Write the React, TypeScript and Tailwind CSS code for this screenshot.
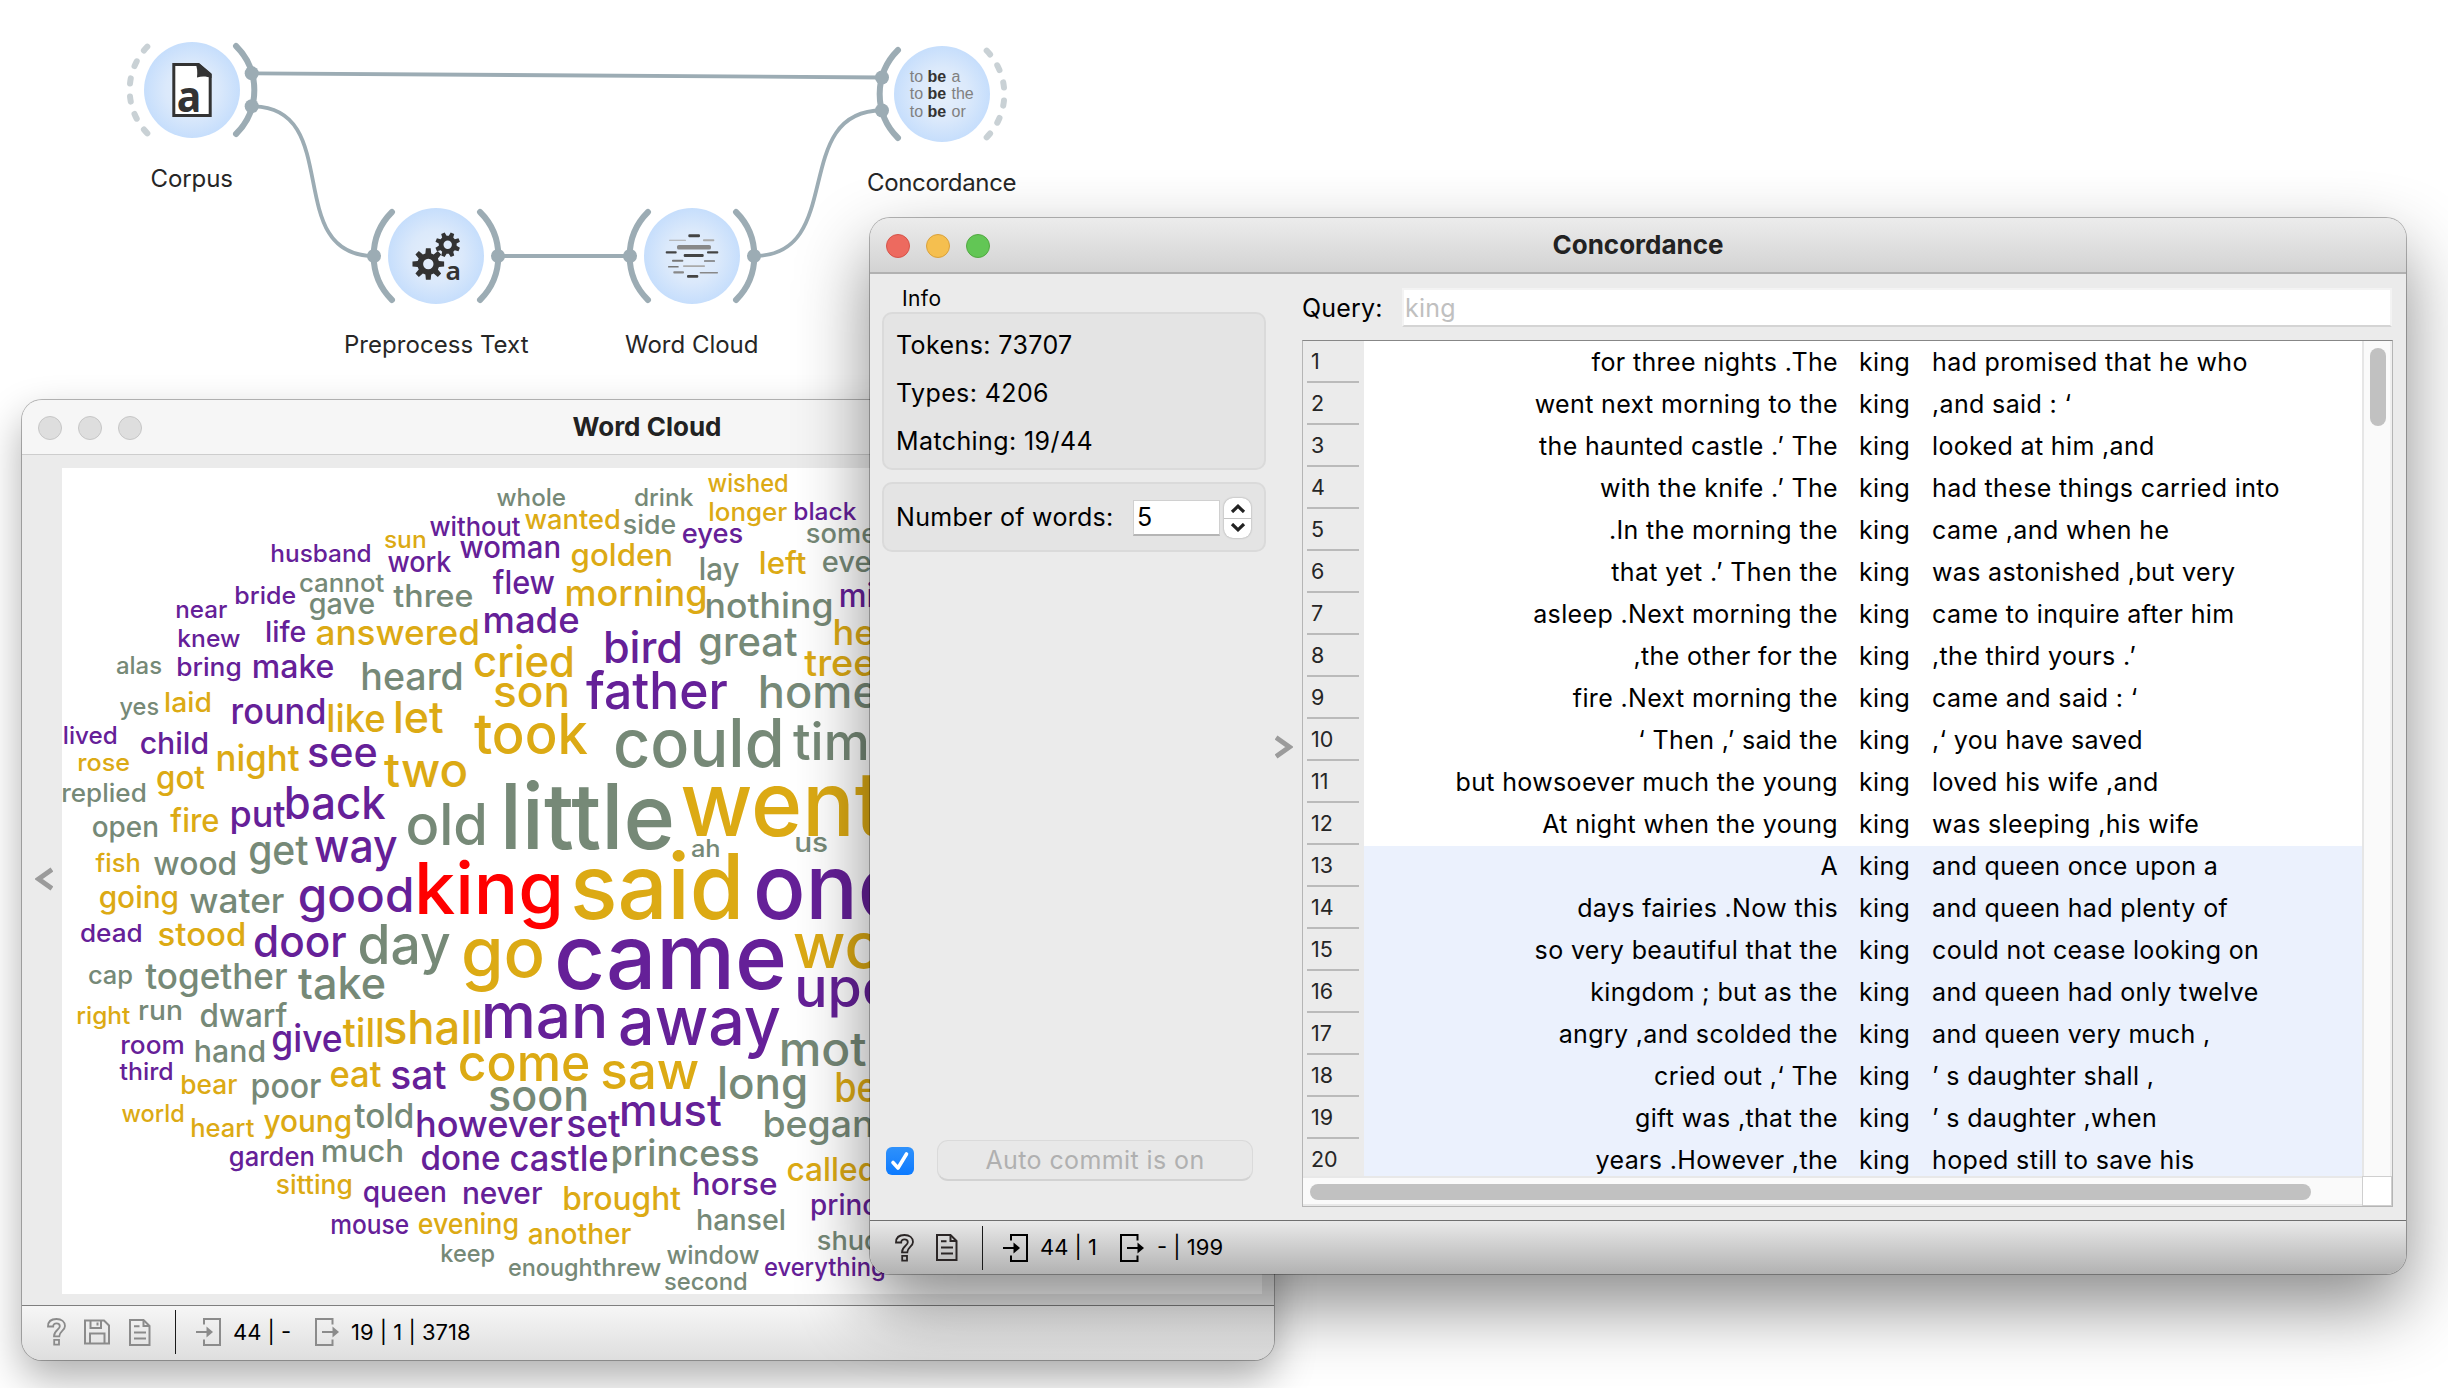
import React from "react";

type Tone = "p" | "y" | "g" | "r";
type Word = [text: string, left: number, right: number, baseline: number, size: number, tone: Tone];

const WORDS: Word[] = [
  ["husband", 272, 370, 561.7, 24, "p"],
  ["sun", 385, 425, 547.7, 24, "y"],
  ["work", 388, 451, 572, 28, "p"],
  ["cannot", 300, 384, 591.7, 25, "g"],
  ["gave", 310, 374, 613.5, 28, "g"],
  ["three", 394, 472, 607.3, 31, "g"],
  ["bride", 236, 295, 603.7, 24, "p"],
  ["near", 177, 227, 617.7, 24, "p"],
  ["knew", 179, 240, 647.2, 24, "p"],
  ["life", 267, 305, 641.7, 29, "p"],
  ["answered", 317, 477.5, 645.3, 35, "y"],
  ["alas", 117, 161, 673.8, 24, "g"],
  ["bring", 178, 240, 675.5, 25.5, "p"],
  ["make", 254, 333, 677.5, 32, "p"],
  ["heard", 363, 461, 689.7, 38, "g"],
  ["yes", 120, 158, 715.3, 24, "g"],
  ["laid", 166, 210, 711.5, 27.5, "y"],
  ["round", 233, 324, 723.5, 35.5, "p"],
  ["like", 329, 384, 731.5, 38.5, "y"],
  ["let", 396, 443, 733.3, 44, "y"],
  ["lived", 64.5, 116, 743.5, 24, "p"],
  ["child", 141, 207, 753.5, 30, "p"],
  ["rose", 79, 129, 771.2, 24, "y"],
  ["got", 157.5, 204.5, 789.3, 32, "y"],
  ["night", 218, 299, 771.3, 36, "y"],
  ["see", 309, 376, 766.8, 42, "p"],
  ["two", 385, 466, 787.2, 47, "y"],
  ["replied", 63, 145, 801.5, 25, "g"],
  ["put", 232, 285, 827, 36, "p"],
  ["back", 287, 385, 819.3, 45, "p"],
  ["fire", 171, 218, 831.5, 32, "y"],
  ["open", 93, 157, 837, 28, "g"],
  ["whole", 497, 565, 505.5, 24, "g"],
  ["drink", 635, 693, 505.5, 24, "g"],
  ["wished", 708, 787, 492, 24.5, "y"],
  ["without", 430, 520, 535.7, 26, "p"],
  ["wanted", 525, 619, 529.3, 27.5, "y"],
  ["side", 624, 675, 533.7, 26, "g"],
  ["longer", 710, 787, 521.3, 25, "y"],
  ["black", 795, 856, 519.7, 24, "p"],
  ["woman", 460, 559, 557.5, 30, "p"],
  ["golden", 572, 671, 565.5, 31, "y"],
  ["eyes", 683, 742, 543.3, 27, "p"],
  ["some", 807, 876, 543.3, 26, "g"],
  ["lay", 701, 739, 579.5, 31, "g"],
  ["left", 761, 806, 573.7, 31, "y"],
  ["even", 823, 887, 572, 28, "g"],
  ["flew", 493.5, 554.5, 593.5, 32, "p"],
  ["morning", 567, 705, 605.5, 36, "y"],
  ["nothing", 707, 831, 617.5, 35, "g"],
  ["mi", 841, 873, 607, 32, "p"],
  ["made", 485, 578, 633.2, 36, "p"],
  ["bird", 606, 680, 663.2, 44, "p"],
  ["great", 700, 797, 655.5, 40, "g"],
  ["he", 835, 874, 645.3, 35, "y"],
  ["tree", 805, 874, 675.5, 37, "y"],
  ["cried", 475, 572, 677.2, 43, "y"],
  ["son", 495, 567, 707.3, 44, "y"],
  ["father", 587, 727, 709.2, 52, "p"],
  ["home", 761, 877, 707.5, 45, "g"],
  ["took", 475, 587, 753.6, 56, "y"],
  ["could", 616, 780, 767.3, 67, "g"],
  ["tim", 794, 866, 759.7, 52, "g"],
  ["old", 408, 484, 845.3, 57, "g"],
  ["little", 506, 671, 849.3, 91, "g"],
  ["ah", 692, 719, 857.3, 24, "g"],
  ["us", 796, 827, 851.5, 26, "g"],
  ["went", 682, 883, 835.5, 90, "y"],
  ["king", 419, 559, 913.5, 72, "r"],
  ["said", 574, 738, 919, 91, "y"],
  ["once", 757, 955, 919, 91, "p"],
  ["go", 464, 542, 977.3, 69, "y"],
  ["came", 558, 783, 989, 91, "p"],
  ["wo", 794, 880, 967.5, 63, "y"],
  ["upon", 798, 925, 1007.3, 54, "p"],
  ["man", 485, 604, 1037.5, 62, "p"],
  ["away", 621, 780, 1045.3, 67, "p"],
  ["fish", 96, 139, 871.8, 25, "y"],
  ["wood", 154, 235, 875.2, 32, "g"],
  ["get", 250, 308, 865.4, 41, "g"],
  ["way", 315, 397, 861.6, 46, "p"],
  ["going", 100, 177, 907.5, 30, "y"],
  ["water", 190, 284, 913.3, 34, "g"],
  ["good", 300, 411, 911.5, 48, "p"],
  ["dead", 81, 141, 941.7, 24.5, "p"],
  ["stood", 159, 244, 945.5, 32.5, "y"],
  ["door", 255, 346, 957.2, 44, "p"],
  ["day", 360, 450, 963.6, 55, "g"],
  ["cap", 89, 132, 983.6, 25, "g"],
  ["together", 146, 287, 989.4, 35.5, "g"],
  ["take", 299, 384, 999.3, 44.5, "g"],
  ["right", 78, 130, 1024, 24, "y"],
  ["run", 140, 181, 1019.8, 27, "g"],
  ["dwarf", 201, 287, 1027, 32, "g"],
  ["room", 122, 183, 1053.7, 25, "p"],
  ["hand", 196, 264, 1061.7, 30.5, "g"],
  ["give", 273, 341, 1051.6, 38, "p"],
  ["till", 343.5, 382, 1047.3, 40, "y"],
  ["shall", 385, 480, 1043.5, 47, "y"],
  ["third", 120, 172, 1079.6, 24, "p"],
  ["bear", 182, 237, 1093.8, 26, "y"],
  ["poor", 253, 321, 1097.8, 34, "g"],
  ["eat", 331, 381, 1087.3, 36, "y"],
  ["sat", 392, 446, 1089, 40, "p"],
  ["world", 122, 183, 1122, 24, "y"],
  ["heart", 192, 254, 1137.3, 25.5, "y"],
  ["young", 264, 350, 1131.6, 31, "y"],
  ["told", 355, 412, 1127.6, 34, "g"],
  ["however", 417.5, 562.5, 1137.3, 37, "p"],
  ["garden", 230, 313, 1165.7, 26, "p"],
  ["much", 323, 402, 1161.7, 31, "g"],
  ["done", 422, 499, 1169.5, 33.5, "p"],
  ["sitting", 277, 351, 1193.7, 26, "y"],
  ["queen", 364, 445, 1201.7, 29, "p"],
  ["mouse", 332, 408, 1233.6, 26, "p"],
  ["evening", 419, 517, 1233.8, 28, "y"],
  ["keep", 442, 494, 1261.7, 24, "g"],
  ["come", 460, 588, 1081.3, 51, "y"],
  ["saw", 602.5, 698.5, 1089.3, 51, "y"],
  ["mot", 782, 866, 1065.5, 47, "g"],
  ["long", 720, 805, 1098.8, 44.5, "g"],
  ["be", 837, 876, 1102, 41, "y"],
  ["soon", 490, 586, 1110.8, 43, "g"],
  ["must", 622, 721, 1125.5, 43.5, "p"],
  ["set", 568, 620, 1137, 37.5, "p"],
  ["began", 765, 872, 1137.3, 37, "g"],
  ["princess", 613, 758, 1165.5, 37, "g"],
  ["castle", 511, 607, 1170.8, 36, "p"],
  ["called", 788, 875, 1181, 33, "y"],
  ["horse", 694, 776, 1195, 31, "p"],
  ["never", 464, 542, 1203.5, 30, "p"],
  ["brought", 564.5, 680.5, 1209.5, 32, "y"],
  ["hansel", 698, 784, 1229.5, 29, "g"],
  ["princ", 812, 877, 1215, 28, "p"],
  ["another", 529, 631, 1243.7, 29, "y"],
  ["shud", 818, 879, 1249.7, 26, "g"],
  ["window", 667, 759, 1263.7, 25.5, "g"],
  ["enough", 509, 591, 1275.8, 24, "g"],
  ["threw", 593, 661, 1275.8, 24, "g"],
  ["second", 665, 746, 1289.5, 24, "g"],
  ["everything", 765, 884, 1275.5, 25, "p"],
];

const TONES: Record<Tone, string> = {
  p: "fill-[#652098]",
  y: "fill-[#dcaa14]",
  g: "fill-[#768977]",
  r: "fill-[#ff0000]",
};

const ROWS: [string, string][] = [
  ["for three nights .The", "had promised that he who"],
  ["went next morning to the", ",and said : ‘"],
  ["the haunted castle .’ The", "looked at him ,and"],
  ["with the knife .’ The", "had these things carried into"],
  [".In the morning the", "came ,and when he"],
  ["that yet .’ Then the", "was astonished ,but very"],
  ["asleep .Next morning the", "came to inquire after him"],
  [",the other for the", ",the third yours .’"],
  ["fire .Next morning the", "came and said : ‘"],
  ["‘ Then ,’ said the", ",‘ you have saved"],
  ["but howsoever much the young", "loved his wife ,and"],
  ["At night when the young", "was sleeping ,his wife"],
  ["A", "and queen once upon a"],
  ["days fairies .Now this", "and queen had plenty of"],
  ["so very beautiful that the", "could not cease looking on"],
  ["kingdom ; but as the", "and queen had only twelve"],
  ["angry ,and scolded the", "and queen very much ,"],
  ["cried out ,‘ The", "’ s daughter shall ,"],
  ["gift was ,that the", "’ s daughter ,when"],
  ["years .However ,the", "hoped still to save his"],
];

// Side bearing of a letter as a fraction of the font size.
function bearing(letter: string) {
  if ("bhklmnpriu".includes(letter)) return 0.07;
  if ("wvytfkx".includes(letter)) return 0.02;
  return 0.045;
}

function rightBearing(letter: string) {
  if ("dghlmnu".includes(letter)) return 0.07;
  if ("wvytfkrx".includes(letter)) return 0.015;
  return 0.045;
}

function WordCloud() {
  return (
    <svg className="block h-[826px] w-[1200px] font-[450]" viewBox="62 468 1200 826">
      {WORDS.map(([text, left, right, baseline, size, tone]) => {
        const lead = bearing(text[0]) * size;
        const trail = rightBearing(text[text.length - 1]) * size;
        return (
          <text
            key={text}
            x={left - lead}
            y={baseline}
            fontSize={size}
            textLength={right - left + lead + trail}
            lengthAdjust="spacingAndGlyphs"
            className={TONES[tone]}
          >
            {text}
          </text>
        );
      })}
    </svg>
  );
}

function gear(cx: number, cy: number, outer: number, inner: number, hole: number, turn: number) {
  const pts: string[] = [];
  for (let i = 0; i < 8; i++) {
    const a = (i * Math.PI) / 4 + turn;
    const at = (r: number, d: number) =>
      `${(cx + r * Math.cos(a + d)).toFixed(2)} ${(cy + r * Math.sin(a + d)).toFixed(2)}`;
    pts.push(at(inner, -0.27), at(outer, -0.15), at(outer, 0.15), at(inner, 0.27));
  }
  return `M${pts.join("L")}Z M${cx - hole} ${cy}a${hole} ${hole} 0 1 0 ${hole * 2} 0a${hole} ${hole} 0 1 0 ${-hole * 2} 0Z`;
}

const BARS: [number, number, number, number, string][] = [
  [688.3, 700, 235.7, 3, "#444"],
  [669, 686, 240.3, 1.1, "#aaa"],
  [703, 714.3, 240.3, 2, "#aaa"],
  [677, 711, 247.3, 4.6, "#888"],
  [665.7, 676.7, 252.4, 2.2, "#444"],
  [707, 718.3, 252.4, 2.2, "#444"],
  [683.7, 703.7, 255.4, 3, "#444"],
  [672, 683.3, 260.8, 1.9, "#777"],
  [704, 715, 261, 1.5, "#777"],
  [668, 678.7, 266.8, 1.6, "#777"],
  [683, 705, 266.1, 1.9, "#aaa"],
  [673.3, 684, 272.3, 2.2, "#888"],
  [699.7, 718, 272.7, 1.5, "#888"],
  [687, 698.3, 276.4, 2.6, "#444"],
];

function Arc({ cx, cy, side, open }: { cx: number; cy: number; side: 1 | -1; open?: boolean }) {
  const d = `M${cx + side * 44} ${cy - 44}A62 62 0 0 ${side === 1 ? 1 : 0} ${cx + side * 44} ${cy + 44}`;
  return (
    <path
      d={d}
      fill="none"
      stroke={open ? "#c9d1d5" : "#9cacb4"}
      strokeWidth="6"
      strokeLinecap="round"
      strokeDasharray={open ? "5.2 12.9" : undefined}
      strokeDashoffset={open ? -1 : undefined}
    />
  );
}

function Workflow() {
  const nodes: [string, number, number, number, number, number][] = [
    ["Corpus", 192, 90, 186.7, 152, 231.5],
    ["Preprocess Text", 436, 256, 352.7, 345.5, 527],
    ["Word Cloud", 692, 256, 352.7, 626.5, 757],
    ["Concordance", 942, 94, 190.7, 868.5, 1015],
  ];
  return (
    <svg className="absolute left-0 top-0 h-[400px] w-[1100px]" viewBox="0 0 1100 400">
      <defs>
        <radialGradient id="node">
          <stop offset="0" stopColor="#e6effb" />
          <stop offset="0.55" stopColor="#dbe9fb" />
          <stop offset="1" stopColor="#c6defc" />
        </radialGradient>
      </defs>
      <g fill="none" stroke="#9cacb4" strokeWidth="3.8">
        <path d="M252 73.3L882 77.5" />
        <path d="M252 106.3C345 106.3 281 256 374 256" />
        <path d="M498 256H630" />
        <path d="M754 256C847 256 789 110.5 882 110.5" />
      </g>
      <Arc cx={192} cy={90} side={-1} open />
      <Arc cx={192} cy={90} side={1} />
      <Arc cx={436} cy={256} side={-1} />
      <Arc cx={436} cy={256} side={1} />
      <Arc cx={692} cy={256} side={-1} />
      <Arc cx={692} cy={256} side={1} />
      <Arc cx={942} cy={94} side={-1} />
      <Arc cx={942} cy={94} side={1} open />
      <g fill="#9cacb4">
        {[[251.7, 73.3], [251.7, 106.3], [374, 256], [498, 256], [630, 256], [754, 256], [882, 77.5], [882, 110.5]].map(
          ([x, y]) => (
            <circle key={`${x}-${y}`} cx={x} cy={y} r="7" />
          ),
        )}
      </g>
      {nodes.map(([label, cx, cy, baseline, left, right]) => (
        <g key={label}>
          <circle cx={cx} cy={cy} r="48" fill="url(#node)" />
          <text x={left - 1.5} y={baseline} fontSize="24" textLength={right - left + 3} className="fill-[#262626]">
            {label}
          </text>
        </g>
      ))}
      <path d="M173.8 64.5H198L210.2 75V115.5H173.8Z" fill="#fff" stroke="#333" strokeWidth="3" />
      <path d="M195 63H199L211.5 73.5V78C207 76.5 202 76 197 77.5C197.5 72 197.5 67 195 63Z" fill="#333" />
      <text x="176.8" y="111.6" fontSize="43" textLength="24.5" lengthAdjust="spacingAndGlyphs" className="fill-[#333] font-['Noto_Sans'] font-bold">
        a
      </text>
      <path d={gear(428.3, 264, 16, 11, 5.2, 0)} fill="#333" fillRule="evenodd" />
      <path d={gear(447.7, 244.7, 12.6, 9, 4.2, Math.PI / 8)} fill="#333" fillRule="evenodd" />
      <text x="445.4" y="279.8" fontSize="26" textLength="15.5" lengthAdjust="spacingAndGlyphs" className="fill-[#333] font-['Noto_Sans'] font-semibold">
        a
      </text>
      {BARS.map(([x1, x2, y, w, color]) => (
        <rect key={`${x1}-${y}`} x={x1} y={y - w / 2} width={x2 - x1} height={w} rx={w / 2.5} fill={color} />
      ))}
      <g className="font-['Liberation_Sans']" fontSize="16" fill="#808080">
        {[["a", 81.7], ["the", 99.4], ["or", 117]].map(([tail, y]) => (
          <text key={tail} y={y}>
            <tspan x="909.7">to</tspan>
            <tspan x="927.5" fontWeight="700" fill="#333">be</tspan>
            <tspan x="951.5">{tail}</tspan>
          </text>
        ))}
      </g>
    </svg>
  );
}

function HelpIcon() {
  return (
    <svg className="h-[28px] w-[19px]" viewBox="0 0 19 28" fill="none" stroke="currentColor" strokeWidth="1.8">
      <path d="M1 8.5C1 3.5 4.5 1 9.5 1S18 3.6 18 8C18 12.5 12.3 13.5 12.3 18.3H7C7 12 12.8 11.8 12.8 8.2C12.8 6.4 11.5 5.4 9.5 5.4S6.2 6.5 6.2 8.5Z" />
      <path d="M7.2 21.8H12V26.6H7.2Z" />
    </svg>
  );
}

function ReportIcon() {
  return (
    <svg className="h-[27px] w-[22px]" viewBox="0 0 22 27" fill="none" stroke="currentColor" strokeWidth="2">
      <path d="M1 1H14.5L20.5 7V26H1Z" />
      <path d="M14.5 1V7H20.5" />
      <path d="M5 7.2H10.5M5 13.4H17M5 19.6H17" />
    </svg>
  );
}

function SaveIcon() {
  return (
    <svg className="h-[26px] w-[26px]" viewBox="0 0 26 26" fill="none" stroke="currentColor" strokeWidth="2">
      <path d="M1 1.5H20L25 6.5V24.5H1Z" />
      <path d="M6.5 1.5V9H17V1.5M13.5 3.5V6.5" />
      <path d="M6 24.5V14.5H20.5V24.5" />
    </svg>
  );
}

function InputIcon() {
  return (
    <svg className="h-[28px] w-[25px]" viewBox="0 0 25 28" fill="none" stroke="currentColor" strokeWidth="2">
      <path d="M8 6.5V1H24V27H8V21.5" />
      <path d="M0 14H12" />
      <path d="M10.5 8.5L17 14L10.5 19.5Z" fill="currentColor" stroke="none" />
    </svg>
  );
}

function OutputIcon() {
  return (
    <svg className="h-[28px] w-[25px]" viewBox="0 0 25 28" fill="none" stroke="currentColor" strokeWidth="2">
      <path d="M17.5 6.5V1H1V27H17.5V21.5" />
      <path d="M7 14H19" />
      <path d="M17.5 8.5L24 14L17.5 19.5Z" fill="currentColor" stroke="none" />
    </svg>
  );
}

function Light({ tone }: { tone: string }) {
  return <span className={`size-6 rounded-full border ${tone}`} />;
}

function CloudWindow() {
  return (
    <section className="absolute left-[22px] top-[400px] flex h-[960px] w-[1252px] flex-col overflow-hidden rounded-[20px] bg-[#ebebeb] shadow-[0_0_0_1px_rgba(0,0,0,0.27),0_18px_42px_rgba(0,0,0,0.32)]">
      <header className="relative flex h-[55px] shrink-0 items-center gap-4 border-b border-[#cdcdcd] bg-[#f6f6f6] pl-4 pt-0.5">
        <Light tone="border-[#c6c6c6] bg-[#dedede]" />
        <Light tone="border-[#c6c6c6] bg-[#dedede]" />
        <Light tone="border-[#c6c6c6] bg-[#dedede]" />
        <h2 className="absolute inset-x-0 top-0 pr-0.5 text-center text-[26px] font-bold leading-[53px] text-[#222]">Word Cloud</h2>
      </header>
      <div className="flex h-[851px] shrink-0 border-b border-[#7f7f7f]">
        <div className="flex w-10 items-center justify-center pb-0.5 pl-1">
          <svg className="h-6 w-[18px]" viewBox="0 0 18 24" fill="none" stroke="#9b9b9b" strokeWidth="5">
            <path d="M17 2.5L3.5 12L17 21.5" />
          </svg>
        </div>
        <div className="mt-[13px] h-[826px] w-[1200px] bg-white">
          <WordCloud />
        </div>
      </div>
      <footer className="flex flex-1 items-center bg-linear-to-b from-[#f6f6f6] to-[#dedede] pb-0.5 pl-[25px] text-[22px] text-black">
        <span className="flex items-center text-[#8b8b8b]">
          <HelpIcon />
          <span className="ml-[18px]"><SaveIcon /></span>
          <span className="ml-[19px]"><ReportIcon /></span>
        </span>
        <span className="ml-6 h-11 w-px bg-[#1a1a1a]" />
        <span className="ml-5 text-[#8b8b8b]"><InputIcon /></span>
        <span className="ml-3 w-[82px]">44 | -</span>
        <span className="text-[#8b8b8b]"><OutputIcon /></span>
        <span className="ml-[11px]">19 | 1 | 3718</span>
      </footer>
    </section>
  );
}

function ControlPanel() {
  return (
    <div className="flex w-[384px] flex-col pb-[39px] text-[25px] tracking-[0.4px]">
      <div className="mt-[11px] flex h-[27px] items-center pl-5 pt-px text-[21px]">Info</div>
      <div className="h-[158px] rounded-[10px] border-2 border-[#dadada] bg-[#e4e4e4] pl-3 pt-[7px] leading-[48px]">
        <p>Tokens: 73707</p>
        <p>Types: 4206</p>
        <p>Matching: 19/44</p>
      </div>
      <div className="mt-3 flex h-[70px] items-center rounded-[10px] border-2 border-[#dadada] bg-[#e4e4e4] pl-3 pt-0.5">
        <span className="w-[237px] tracking-[0.3px]">Number of words:</span>
        <span className="flex h-9 w-[87px] items-center border border-b-2 border-[#d0d0d0] border-b-[#b5b5b5] bg-white pl-[3px]">5</span>
        <span className="ml-1 flex h-10 w-[27px] flex-col items-center justify-between rounded-[9px] bg-white py-[6px] shadow-[0_0_2px_rgba(0,0,0,0.35)]">
          <svg className="h-[9px] w-4" viewBox="0 0 16 9" fill="none" stroke="#222" strokeWidth="3.2"><path d="M2 8L8 2.2L14 8" /></svg>
          <span className="h-px w-full bg-[#c4c4c4]" />
          <svg className="h-[9px] w-4" viewBox="0 0 16 9" fill="none" stroke="#222" strokeWidth="3.2"><path d="M2 1L8 6.8L14 1" /></svg>
        </span>
      </div>
      <div className="mt-auto flex items-center pl-1">
        <span className="flex size-7 items-center justify-center rounded-[6px] bg-linear-to-b from-[#2e91fb] to-[#0a7aff]">
          <svg className="size-[22px]" viewBox="0 0 22 22" fill="none" stroke="#fff" strokeWidth="3.6" strokeLinecap="round" strokeLinejoin="round">
            <path d="M4 12.5L9 18L17.5 4" />
          </svg>
        </span>
        <span className="ml-[23px] flex h-[41px] w-[316px] items-center justify-center rounded-[11px] border border-b-2 border-[#dadada] border-b-[#d2d2d2] bg-[#e8e8e8] pt-0.5 text-[#b0b0b0]">
          Auto commit is on
        </span>
      </div>
    </div>
  );
}

function ResultTable() {
  return (
    <div className="mt-[13px] flex h-[867px] w-[1091px] flex-col border border-[#b5b5b5] border-t-[#878787]">
      <div className="flex h-[835px]">
        <div className="w-[61px] overflow-hidden pl-1 pr-[5px] text-[21.5px] text-[#262626]">
          {ROWS.map((_, i) => (
            <div key={i} className="flex h-[42px] items-center border-b-2 border-[#bababa] pl-1">
              {i + 1}
            </div>
          ))}
        </div>
        <div className="w-[998px] overflow-hidden bg-white pt-px text-[25px] leading-[40px] tracking-[0.35px] text-black">
          {ROWS.map(([before, after], i) => (
            <div key={i} className={i < 12 ? "flex h-[42px]" : "flex h-[42px] bg-[#ebf1fd]"}>
              <span className="w-[474px] text-right">{before}</span>
              <span className="ml-[21px] w-[73px]">king</span>
              <span>{after}</span>
            </div>
          ))}
        </div>
        <div className="flex w-[30px] justify-center border-l-2 border-r-2 border-[#e6e6e6] border-r-[#efefef] bg-[#fafafa] pl-0.5 pt-[7px]">
          <span className="h-[78px] w-4 rounded-full bg-[#c1c1c1]" />
        </div>
      </div>
      <div className="flex h-[30px]">
        <div className="flex w-[1059px] items-center border-b-2 border-t-2 border-[#e8e8e8] bg-[#fafafa] pl-[7px] pt-0.5">
          <span className="h-4 w-[1001px] rounded-full bg-[#c1c1c1]" />
        </div>
        <div className="w-[30px] border border-[#cfcfcf] bg-white" />
      </div>
    </div>
  );
}

function ConcordanceWindow() {
  return (
    <section className="absolute left-[870px] top-[218px] flex h-[1056px] w-[1536px] flex-col overflow-hidden rounded-[20px] bg-[#ebebeb] text-black shadow-[0_0_0_1px_rgba(0,0,0,0.28),0_32px_72px_rgba(0,0,0,0.46)]">
      <header className="relative flex h-14 shrink-0 items-center gap-4 border-b-2 border-[#b1b1b1] bg-linear-to-b from-[#ececec] to-[#d3d3d3] pl-4 pt-0.5">
        <Light tone="border-[#d5544a] bg-[#ed6a5f]" />
        <Light tone="border-[#d9a13c] bg-[#f5bf4f]" />
        <Light tone="border-[#52a842] bg-[#62c655]" />
        <h2 className="absolute inset-x-0 top-0 text-center text-[26px] font-bold leading-[53px] text-[#222]">Concordance</h2>
      </header>
      <div className="flex h-[947px] shrink-0 border-b border-[#6f6f6f] pl-3">
        <ControlPanel />
        <div className="flex w-9 items-center justify-center">
          <svg className="h-6 w-[18px]" viewBox="0 0 18 24" fill="none" stroke="#9b9b9b" strokeWidth="5">
            <path d="M1 2.5L14.5 12L1 21.5" />
          </svg>
        </div>
        <div className="pt-3.5">
          <div className="flex h-[39px] items-center text-[25px]">
            <span className="w-[100px] pt-0.5 tracking-[0.2px]">Query:</span>
            <span className="flex h-[39px] w-[990px] items-center border-2 border-[#f3f3f3] border-b-[#d4d4d4] bg-white pl-px pt-0.5 tracking-[0.2px] text-[#c0c0c0]">king</span>
          </div>
          <ResultTable />
        </div>
      </div>
      <footer className="flex flex-1 items-center bg-linear-to-b from-[#e9e9e9] to-[#b2b2b2] pl-[25px] text-[22px]">
        <span className="flex items-center text-[#2b2626]">
          <HelpIcon />
          <span className="ml-[22px]"><ReportIcon /></span>
        </span>
        <span className="ml-6 h-11 w-px bg-[#1a1a1a]" />
        <span className="ml-5"><InputIcon /></span>
        <span className="ml-3 w-[80px]">44 | 1</span>
        <OutputIcon />
        <span className="ml-3">- | 199</span>
      </footer>
    </section>
  );
}

export default function App() {
  return (
    <main className="relative h-[1388px] w-[2448px] overflow-hidden bg-white font-[Inter,sans-serif]">
      <Workflow />
      <CloudWindow />
      <ConcordanceWindow />
    </main>
  );
}
